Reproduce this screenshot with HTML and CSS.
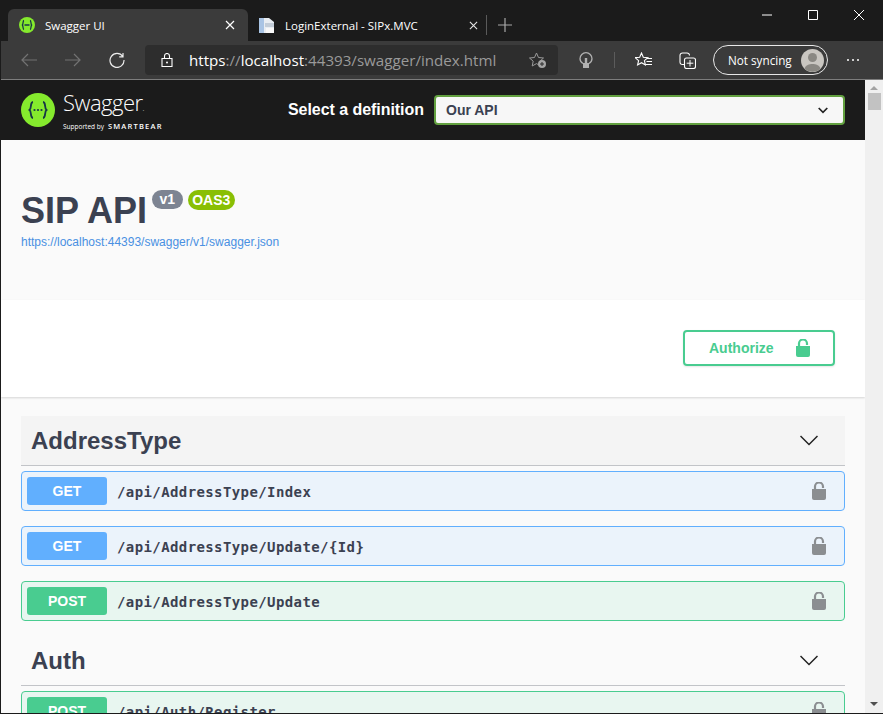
FILE: index.html
```html
<!DOCTYPE html>
<html lang="en">
<head>
<meta charset="utf-8">
<title>Swagger UI</title>
<link rel="stylesheet" href="styles.css">
</head>
<body>
<div class="window">
  <div class="tabstrip">
    <div class="tab tab-active">
      <svg class="favicon" width="16" height="16" viewBox="0 0 16 16"><circle cx="8" cy="8" r="8" fill="#85ea2d"/><path d="M5 3.500C3.600 3.800 4.400 6.800 3.400 8c1 1.200.2 4.200 1.600 4.500M11 3.500c1.400.3.600 3.300 1.600 4.500-1 1.200-.2 4.200-1.600 4.500M5.500 8h5" fill="none" stroke="#173647" stroke-width="1.300"/></svg>
      <span class="tab-title">Swagger UI</span>
      <svg class="tab-close" width="10" height="10" viewBox="0 0 10 10"><path d="M1 1l8 8M9 1l-8 8" stroke="#fff" stroke-width="1.200"/></svg>
    </div>
    <div class="tab tab-idle">
      <svg class="favicon" width="17" height="17" viewBox="0 0 17 17"><path d="M1 1h10l5 4v11H1z" fill="#e8edf2"/><path d="M1 1h5v15H1z" fill="#a9c4e4"/><path d="M7 6h9v4H7z" fill="#c3cdd8"/><path d="M8 11h8v5H8z" fill="#f8f8f8"/></svg>
      <span class="tab-title">LoginExternal - SIPx.MVC</span>
      <svg class="tab-close" width="9" height="9" viewBox="0 0 10 10"><path d="M1 1l8 8M9 1l-8 8" stroke="#e6e6e6" stroke-width="1.200"/></svg>
    </div>
    <span class="tab-sep"></span>
    <svg class="new-tab" width="14" height="14" viewBox="0 0 14 14"><path d="M7 0v14M0 7h14" stroke="#a8a8a8" stroke-width="1.200"/></svg>
    <div class="win-controls">
      <svg width="10" height="10" viewBox="0 0 10 10"><path d="M0 5h10" stroke="#fff"/></svg>
      <svg width="10" height="10" viewBox="0 0 10 10"><path d="M.5.500h9v9h-9z" fill="none" stroke="#fff"/></svg>
      <svg width="10" height="10" viewBox="0 0 10 10"><path d="M0 0l10 10M10 0L0 10" stroke="#fff"/></svg>
    </div>
  </div>
  <div class="toolbar">
    <svg class="nav-icon nav-back" width="16" height="14" viewBox="0 0 16 14"><path d="M16 7H1M7 1L1 7l6 6" fill="none" stroke="#737373" stroke-width="1.200"/></svg>
    <svg class="nav-icon nav-forward" width="16" height="14" viewBox="0 0 16 14"><path d="M0 7h15M9 1l6 6-6 6" fill="none" stroke="#737373" stroke-width="1.200"/></svg>
    <svg class="nav-icon nav-reload" width="16" height="16" viewBox="0 0 16 16"><path d="M13.800 4.500A7 7 0 1 0 15 8M10.200 4.800h3.800V1" fill="none" stroke="#ececec" stroke-width="1.200"/></svg>
    <div class="addressbar">
      <svg class="addr-lock" width="12" height="14" viewBox="0 0 12 14"><path d="M1 5.500h10v8H1zM3.500 5.500V3a2.500 2.500 0 0 1 5 0v2.500" fill="none" stroke="#fff" stroke-width="1.100"/><circle cx="6" cy="9.500" r="1" fill="#fff"/></svg>
      <span class="url"><span class="url-hi">https</span><span class="url-lo">://</span><span class="url-hi">localhost</span><span class="url-lo">:44393/swagger/index.html</span></span>
      <svg class="addr-star" width="18" height="17" viewBox="0 0 18 17"><path d="M7.500 1l2 4.500 5 .5-3.700 3.300 1 4.800-4.300-2.500L3.200 14l1-4.800L.5 6l5-.5z" fill="none" stroke="#9a9a9a"/><circle cx="13" cy="12" r="4" fill="#a5a5a5"/><path d="M11 12h4M13 10v4" stroke="#2d2d2d"/></svg>
    </div>
    <svg class="tool-bulb" width="14" height="17" viewBox="0 0 14 17"><path d="M4 11.500C2.200 10.300 1 8.800 1 6.700a6 6 0 0 1 12 0c0 2.100-1.200 3.600-3 4.800" fill="none" stroke="#b0b0b0" stroke-width="1.300"/><path d="M4 11h6v5H4zM5.800 6h2.400v5H5.800z" fill="#b0b0b0"/></svg>
    <span class="tool-sep"></span>
    <svg class="tool-fav" width="17" height="16" viewBox="0 0 17 16"><path d="M6.500 1l1.800 4.200 4.500.4-3.400 3 1 4.400-3.900-2.300L2.600 13l1-4.400-3.400-3 4.500-.4z" fill="none" stroke="#fff" stroke-width="1.100"/><path d="M12 6.500h5M11.500 9.500h5.500M10.500 12.500H17" stroke="#fff"/></svg>
    <svg class="tool-coll" width="17" height="17" viewBox="0 0 17 17"><path d="M5 12.500H3.500A2.500 2.500 0 0 1 1 10V3.500A2.500 2.500 0 0 1 3.500 1H8a2.500 2.500 0 0 1 2.500 2.500" fill="none" stroke="#fff" stroke-width="1.100"/><rect x="5.500" y="6" width="11" height="10.500" rx="2" fill="#3b3b3b" stroke="#fff" stroke-width="1.100"/><path d="M11 8v6.500M7.700 11.200h6.600" stroke="#fff"/></svg>
    <div class="sync-pill">
      <span class="sync-text">Not syncing</span>
      <svg class="avatar" width="23" height="23" viewBox="0 0 23 23"><circle cx="11.500" cy="11.500" r="11.500" fill="#c9c6c1"/><circle cx="11.500" cy="8.500" r="4.500" fill="#8a8883"/><path d="M3.500 19.500c1.500-3.500 4.500-4.500 8-4.500s6.500 1 8 4.500a11.500 11.500 0 0 1-16 0z" fill="#8a8883"/></svg>
    </div>
    <div class="more-dots"><i></i><i></i><i></i></div>
  </div>
  <div class="viewport">
    <div class="page">
      <header class="topbar">
        <div class="logo">
          <svg class="logo-mark" width="34" height="34" viewBox="0 0 34 34"><circle cx="17" cy="17" r="17" fill="#85ea2d"/><path d="M12 9c-3.200.3-1.200 6.500-3.500 8 2.300 1.500.3 7.700 3.500 8M22 9c3.200.3 1.200 6.500 3.500 8-2.300 1.500-.3 7.700-3.500 8" fill="none" stroke="#173647" stroke-width="1.800"/><circle cx="13.500" cy="17" r="1.100" fill="#173647"/><circle cx="17" cy="17" r="1.100" fill="#173647"/><circle cx="20.500" cy="17" r="1.100" fill="#173647"/></svg>
          <div class="logo-text">
            <span class="logo-name">Swagger<small>.</small></span>
            <span class="logo-sub"><span class="logo-by">Supported by</span><span class="logo-sb">SMARTBEAR</span></span>
          </div>
        </div>
        <label class="def-label">Select a definition</label>
        <div class="def-select">
          <span>Our API</span>
          <svg width="10" height="7" viewBox="0 0 10 7"><path d="M.7 1L5 5.300 9.300 1" fill="none" stroke="#222" stroke-width="1.700"/></svg>
        </div>
      </header>
      <section class="info">
        <div class="title-row">
          <h1 class="title">SIP API</h1>
          <span class="badge badge-version">v1</span>
          <span class="badge badge-oas">OAS3</span>
        </div>
        <a class="spec-link" href="#">https://localhost:44393/swagger/v1/swagger.json</a>
      </section>
      <section class="schemes">
        <button class="authorize">
          <span>Authorize</span>
          <svg width="14" height="18" viewBox="0 0 14 18"><path d="M3 8V4.500a4 4 0 0 1 8 0V6" fill="none" stroke="#49cc90" stroke-width="2.200"/><path d="M0 7h14v9a2 2 0 0 1-2 2H2a2 2 0 0 1-2-2z" fill="#49cc90"/></svg>
        </button>
      </section>
      <main class="ops">
        <div class="tag tag-hover">
          <h3>AddressType</h3>
          <svg width="18" height="11" viewBox="0 0 18 11"><path d="M.5 1L9 9.500 17.500 1" fill="none" stroke="#222" stroke-width="1.500"/></svg>
        </div>
        <div class="op op-get">
          <span class="method">GET</span><span class="path">/api/AddressType/Index</span>
          <svg class="op-lock" width="14" height="18" viewBox="0 0 14 18"><path d="M3 8V4.500a4 4 0 0 1 8 0V6" fill="none" stroke="#8b8e91" stroke-width="2.200"/><path d="M0 7h14v9a2 2 0 0 1-2 2H2a2 2 0 0 1-2-2z" fill="#8b8e91"/></svg>
        </div>
        <div class="op op-get">
          <span class="method">GET</span><span class="path">/api/AddressType/Update/{Id}</span>
          <svg class="op-lock" width="14" height="18" viewBox="0 0 14 18"><path d="M3 8V4.500a4 4 0 0 1 8 0V6" fill="none" stroke="#8b8e91" stroke-width="2.200"/><path d="M0 7h14v9a2 2 0 0 1-2 2H2a2 2 0 0 1-2-2z" fill="#8b8e91"/></svg>
        </div>
        <div class="op op-post">
          <span class="method">POST</span><span class="path">/api/AddressType/Update</span>
          <svg class="op-lock" width="14" height="18" viewBox="0 0 14 18"><path d="M3 8V4.500a4 4 0 0 1 8 0V6" fill="none" stroke="#8b8e91" stroke-width="2.200"/><path d="M0 7h14v9a2 2 0 0 1-2 2H2a2 2 0 0 1-2-2z" fill="#8b8e91"/></svg>
        </div>
        <div class="tag">
          <h3>Auth</h3>
          <svg width="18" height="11" viewBox="0 0 18 11"><path d="M.5 1L9 9.500 17.500 1" fill="none" stroke="#222" stroke-width="1.500"/></svg>
        </div>
        <div class="op op-post">
          <span class="method">POST</span><span class="path">/api/Auth/Register</span>
          <svg class="op-lock" width="14" height="18" viewBox="0 0 14 18"><path d="M3 8V4.500a4 4 0 0 1 8 0V6" fill="none" stroke="#8b8e91" stroke-width="2.200"/><path d="M0 7h14v9a2 2 0 0 1-2 2H2a2 2 0 0 1-2-2z" fill="#8b8e91"/></svg>
        </div>
      </main>
    </div>
    <div class="scrollbar">
      <span class="arrow arrow-up"></span>
      <span class="thumb"></span>
      <span class="arrow arrow-down"></span>
    </div>
  </div>
</div>
</body>
</html>
```

FILE: styles.css
```css
* { box-sizing: border-box; }
html, body { margin: 0; padding: 0; height: 100%; overflow: hidden; }
body { background: #1b1b1b; font-family: "Liberation Sans", Arial, sans-serif; }

.window {
  width: 883px;
  height: 714px;
  display: flex;
  flex-direction: column;
  border-left: 1px solid #1b1b1b;
  border-bottom: 1px solid #1b1b1b;
  overflow: hidden;
}

/* Browser chrome */
.tabstrip {
  height: 41px;
  flex: none;
  background: #1b1b1b;
  display: flex;
  align-items: flex-end;
  padding-left: 7px;
  font-family: "Open Sans", sans-serif;
  font-size: 11.500px;
  color: #fff;
}
.tab {
  height: 32px;
  display: flex;
  align-items: center;
  flex: none;
}
.tab-active {
  width: 240px;
  background: #3b3b3b;
  border-radius: 6px 6px 0 0;
  padding-left: 11px;
}
.tab-idle { width: 238px; padding-left: 10px; }
.tab-title { margin-left: 10px; white-space: nowrap; flex: 1; }
.tab-close { margin-right: 13px; }
.tab-idle .tab-close { margin-right: 8px; }
.tab-sep { width: 1px; height: 20px; background: #5a5a5a; margin-bottom: 6px; }
.new-tab { margin-left: 11px; margin-bottom: 9px; }
.win-controls {
  margin-left: auto;
  align-self: flex-start;
  display: flex;
  gap: 36px;
  padding: 10px 19px 0 0;
}

.toolbar {
  height: 39px;
  flex: none;
  background: #3b3b3b;
  border-bottom: 1px solid #7d7d7d;
  display: flex;
  align-items: center;
  padding-left: 20px;
  font-family: "Open Sans", sans-serif;
}
.nav-forward { margin-left: 28px; }
.nav-reload { margin-left: 28px; }
.addressbar {
  margin-left: 20px;
  width: 413px;
  height: 30px;
  background: #2d2d2d;
  border-radius: 4px;
  display: flex;
  align-items: center;
  padding-left: 16px;
}
.url { margin-left: 16px; font-size: 15.150px; white-space: nowrap; flex: 1; }
.url-hi { color: #fff; }
.url-lo { color: #9a9a9a; }
.addr-star { margin-right: 11px; }
.tool-bulb { margin-left: 21px; }
.tool-sep { width: 1px; height: 16px; background: #5c5c5c; margin-left: 21px; }
.tool-fav { margin-left: 20px; }
.tool-coll { margin-left: 27px; }
.sync-pill {
  margin-left: 17px;
  width: 115px;
  height: 30px;
  border: 1px solid #e8e8e8;
  border-radius: 15px;
  display: flex;
  align-items: center;
  justify-content: space-between;
  padding: 0 3px 0 14px;
  color: #fff;
  font-size: 11.700px;
}
.more-dots { margin-left: 19px; display: flex; gap: 3px; }
.more-dots i { width: 2px; height: 2px; background: #fff; border-radius: 1px; }

/* Viewport */
.viewport { flex: 1; display: flex; min-height: 0; }
.page { flex: 1; min-width: 0; background: #fafafa; overflow: hidden; }
.scrollbar {
  width: 18px;
  flex: none;
  background: #f0f0f0;
  display: flex;
  flex-direction: column;
  align-items: center;
  padding-top: 6px;
}
.arrow { width: 0; height: 0; border-left: 4px solid transparent; border-right: 4px solid transparent; }
.arrow-up { border-bottom: 4px solid #a3a3a3; }
.arrow-down { border-top: 4px solid #505050; margin-top: auto; margin-bottom: 7px; }
.thumb { width: 13px; height: 17px; background: #c2c2c2; margin-top: 3px; }

/* Swagger top bar */
.topbar {
  height: 60px;
  background: #1b1b1b;
  display: flex;
  align-items: center;
  padding: 0 20px;
}
.logo { display: flex; align-items: center; gap: 8px; width: 267px; flex: none; }
.logo-text { display: flex; flex-direction: column; color: #fff; }
.logo-name { font-family: "Open Sans", sans-serif; font-weight: 300; font-size: 22px; letter-spacing: -.5px; line-height: 27px; }
.logo-name small { font-size: 8px; }
.logo-sub { display: flex; align-items: center; gap: 4px; line-height: 9px; margin-top: 1px; }
.logo-by { font-family: "Open Sans", sans-serif; font-size: 6.500px; }
.logo-sb { font-family: "Open Sans", sans-serif; font-size: 7.500px; font-weight: 600; letter-spacing: 1.200px; }
.def-label { color: #fff; font-weight: 700; font-size: 16px; white-space: nowrap; width: 146px; flex: none; letter-spacing: -.05px; }
.def-select {
  flex: 1;
  height: 30px;
  background: #f7f7f7;
  border: 2px solid #62a03f;
  border-radius: 4px;
  display: flex;
  align-items: center;
  justify-content: space-between;
  padding: 0 15px 0 10px;
  color: #3b4151;
  font-weight: 700;
  font-size: 14px;
}

/* Info */
.info { height: 160px; padding: 50px 20px 0; }
.title-row { display: flex; align-items: flex-start; }
.title {
  margin: 0 5px 0 0;
  color: #3b4151;
  font-size: 36px;
  font-weight: 700;
  line-height: 42px;
}
.badge {
  height: 20px;
  border-radius: 10px;
  color: #fff;
  font-size: 14px;
  font-weight: 700;
  line-height: 20px;
}
.badge-version { background: #7d8492; padding: 0 7.500px; margin-right: 5px; height: 19px; line-height: 19px; }
.badge-oas { background: #89bf04; padding: 0 4.500px; }
.spec-link {
  display: block;
  margin-top: 2px;
  color: #4990e2;
  font-size: 12px;
  line-height: 16px;
  text-decoration: none;
}

/* Schemes */
.schemes {
  height: 97px;
  background: #fff;
  box-shadow: 0 1px 2px rgba(0,0,0,.15);
  padding: 30px 30px 0 0;
  display: flex;
  justify-content: flex-end;
  align-items: flex-start;
  position: relative;
}
.authorize {
  width: 152px;
  height: 36px;
  background: transparent;
  border: 2px solid #49cc90;
  border-radius: 4px;
  box-shadow: 0 1px 2px rgba(0,0,0,.1);
  color: #49cc90;
  font-family: inherit;
  font-size: 14px;
  font-weight: 700;
  display: flex;
  align-items: center;
  justify-content: space-between;
  padding: 0 23px 0 24px;
}

/* Operations */
.ops { padding: 19px 20px 0; }
.tag {
  height: 50px;
  border-bottom: 1px solid #c2c4c8;
  display: flex;
  align-items: center;
  justify-content: space-between;
  padding: 0 27px 0 10px;
  margin-bottom: 5px;
}
.tag-hover { background: #f4f4f4; }
.tag h3 { margin: 0; font-size: 24px; font-weight: 700; color: #3b4151; }
.op {
  height: 40px;
  border: 1px solid;
  border-radius: 4px;
  display: flex;
  align-items: center;
  padding: 0 18px 0 5px;
  margin-bottom: 15px;
}
.op-get { background: #ebf3fb; border-color: #61affe; }
.op-post { background: #e8f6f0; border-color: #49cc90; }
.method {
  width: 80px;
  height: 28px;
  border-radius: 3px;
  color: #fff;
  font-size: 14px;
  font-weight: 700;
  line-height: 28px;
  text-align: center;
}
.op-get .method { background: #61affe; }
.op-post .method { background: #49cc90; }
.path {
  margin-left: 10px;
  padding-top: 2px;
  flex: 1;
  font-family: "DejaVu Sans Mono", monospace;
  font-weight: 700;
  font-size: 14px;
  letter-spacing: .400px;
  color: #3b4151;
}
```
